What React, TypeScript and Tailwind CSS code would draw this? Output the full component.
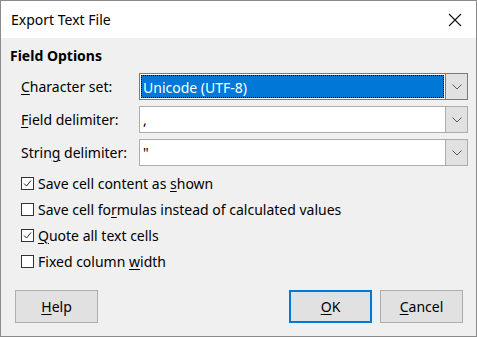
import React from "react";

const font = { fontFamily: '"Noto Sans", "Open Sans", sans-serif' };

function U({ children }: { children: React.ReactNode }) {
  return <span className="underline underline-offset-[2px] decoration-1">{children}</span>;
}

function Chevron() {
  return (
    <svg width="10" height="6" viewBox="0 0 10 6" fill="none">
      <path d="M0.5 0.5 L5 5 L9.5 0.5" stroke="#5a5a5a" strokeWidth="1" />
    </svg>
  );
}

function Combo({ value, focused = false }: { value: string; focused?: boolean }) {
  return (
    <div className={`flex h-[27px] w-[329px] border ${focused ? "border-[#7a7a7a]" : "border-[#adadad]"} bg-white`}>
      <div className="flex-1 p-[1px]">
        {focused ? (
          <div className="h-full bg-[#0078d7] border border-dotted border-black text-white text-[14px] leading-[23px] pl-[1px]">{value}</div>
        ) : (
          <div className="h-full text-[14px] leading-[23px] pl-[2px] text-black">{value}</div>
        )}
      </div>
      <div className={`w-[22px] flex items-center justify-center bg-[#e1e1e1] border-l ${focused ? "border-[#7a7a7a]" : "border-[#adadad]"}`}>
        <Chevron />
      </div>
    </div>
  );
}

function Check({ checked, children }: { checked: boolean; children: React.ReactNode }) {
  return (
    <label className="flex items-center h-[26px] gap-[4px] text-[14px] text-black">
      <span className="w-[13px] h-[13px] border border-[#333] bg-white flex items-center justify-center">
        {checked && (
          <svg width="9" height="9" viewBox="0 0 9 9" fill="none">
            <path d="M1 4.5 L3.5 7 L8 1.5" stroke="#222" strokeWidth="1" />
          </svg>
        )}
      </span>
      <span>{children}</span>
    </label>
  );
}

function Btn({ children, primary = false }: { children: React.ReactNode; primary?: boolean }) {
  return (
    <button className={`w-[83px] h-[33px] bg-[#e1e1e1] text-[14px] text-black ${primary ? "border-2 border-[#0078d7]" : "border border-[#adadad]"}`}>
      {children}
    </button>
  );
}

export default function App() {
  const rows = [
    { label: <><U>C</U>haracter set:</>, value: "Unicode (UTF-8)", focused: true },
    { label: <><U>F</U>ield delimiter:</>, value: "," },
    { label: <>Strin<U>g</U> delimiter:</>, value: '"' },
  ];

  return (
    <div className="w-[477px] h-[337px] flex flex-col border border-[#8a8a8a] bg-[#f0f0f0]" style={font}>
      <div className="h-[37px] bg-white flex items-center justify-between pl-[10px] pr-[14px]">
        <span className="text-[14px] text-black">Export Text File</span>
        <svg width="14" height="14" viewBox="0 0 14 14" fill="none">
          <path d="M1 1 L13 13 M13 1 L1 13" stroke="#111" strokeWidth="1.1" />
        </svg>
      </div>

      <div className="flex-1 flex flex-col pl-[9px] pr-[7px] pt-[7px]">
        <div className="text-[14px] font-bold leading-[22px] text-black">Field Options</div>

        <div className="flex flex-col gap-[6px] mt-[6px] pl-[11px]">
          {rows.map((r, i) => (
            <div key={i} className="flex items-center">
              <span className="w-[118px] text-[14px] text-black">{r.label}</span>
              <Combo value={r.value} focused={r.focused} />
            </div>
          ))}
        </div>

        <div className="flex flex-col mt-[4px] pl-[11px]">
          <Check checked>Save cell content as <U>s</U>hown</Check>
          <Check checked={false}>Save cell fo<U>r</U>mulas instead of calculated values</Check>
          <Check checked><U>Q</U>uote all text cells</Check>
          <Check checked={false}>Fixed column <U>w</U>idth</Check>
        </div>

        <div className="flex items-center mt-[16px] pl-[5px] pr-[6px]">
          <Btn><U>H</U>elp</Btn>
          <div className="flex-1" />
          <div className="flex gap-[8px]">
            <Btn primary><U>O</U>K</Btn>
            <Btn><U>C</U>ancel</Btn>
          </div>
        </div>
      </div>
    </div>
  );
}
